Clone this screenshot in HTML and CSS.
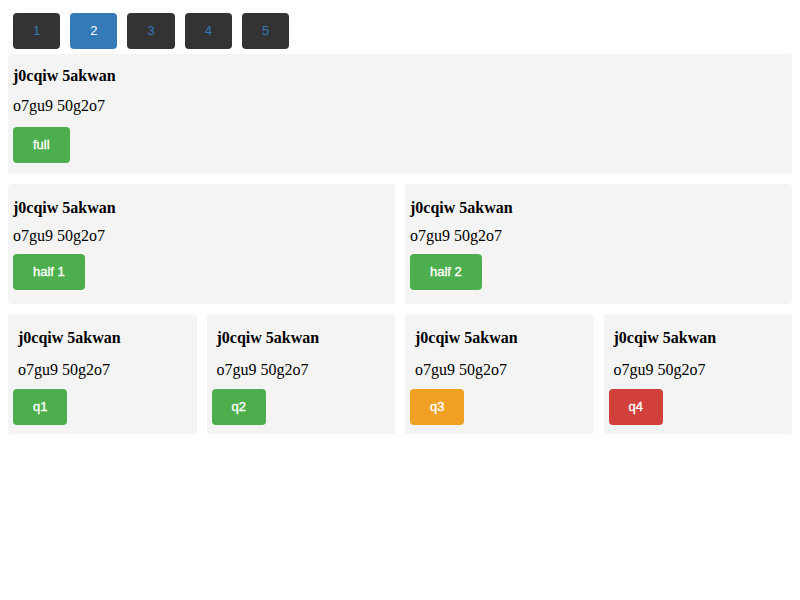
FILE: index.html
```html
<!DOCTYPE html>
<html>
<head>
<meta charset="utf-8">
<link rel="stylesheet" href="styles.css">
</head>
<body>
<nav class="pager">
  <button class="page">1</button>
  <button class="page active">2</button>
  <button class="page">3</button>
  <button class="page">4</button>
  <button class="page">5</button>
</nav>
<div class="row row-1">
  <div class="card card-full">
    <div class="title">j0cqiw 5akwan</div>
    <div class="text">o7gu9 50g2o7</div>
    <button class="btn green">full</button>
  </div>
</div>
<div class="row row-2">
  <div class="card card-half">
    <div class="title">j0cqiw 5akwan</div>
    <div class="text">o7gu9 50g2o7</div>
    <button class="btn green">half 1</button>
  </div>
  <div class="card card-half">
    <div class="title">j0cqiw 5akwan</div>
    <div class="text">o7gu9 50g2o7</div>
    <button class="btn green">half 2</button>
  </div>
</div>
<div class="row row-4">
  <div class="card card-quarter">
    <div class="title">j0cqiw 5akwan</div>
    <div class="text">o7gu9 50g2o7</div>
    <button class="btn green">q1</button>
  </div>
  <div class="card card-quarter">
    <div class="title">j0cqiw 5akwan</div>
    <div class="text">o7gu9 50g2o7</div>
    <button class="btn green">q2</button>
  </div>
  <div class="card card-quarter">
    <div class="title">j0cqiw 5akwan</div>
    <div class="text">o7gu9 50g2o7</div>
    <button class="btn orange">q3</button>
  </div>
  <div class="card card-quarter">
    <div class="title">j0cqiw 5akwan</div>
    <div class="text">o7gu9 50g2o7</div>
    <button class="btn red">q4</button>
  </div>
</div>
</body>
</html>
```

FILE: styles.css
```css
html, body {
  background: #ffffff;
}
body {
  margin: 8px;
  font-family: "Liberation Serif", "Times New Roman", serif;
  font-size: 16px;
  color: #000;
}
.pager {
  display: flex;
  gap: 10px;
  padding: 5px;
}
.page {
  height: 36px;
  padding: 0 20px;
  border: none;
  border-radius: 4px;
  background: #333333;
  color: #337ab7;
  font-family: "Liberation Sans", Arial, sans-serif;
  font-size: 13px;
  line-height: 36px;
  cursor: pointer;
}
.page.active {
  background: #337ab7;
  color: #ffffff;
}
.row {
  display: grid;
  gap: 10px;
  margin-top: 10px;
}
.row-1 {
  grid-template-columns: 1fr;
  margin-top: 0;
}
.row-2 {
  grid-template-columns: 1fr 1fr;
}
.row-4 {
  grid-template-columns: repeat(4, 1fr);
}
.card {
  background: #f4f4f4;
  border-radius: 4px;
  height: 120px;
  box-sizing: border-box;
  padding: 5px;
  display: flex;
  flex-direction: column;
  align-items: flex-start;
}
.title {
  font-weight: bold;
  line-height: 18px;
}
.text {
  line-height: 18px;
}
.btn {
  height: 36px;
  padding: 0 20px;
  border: none;
  border-radius: 4px;
  color: #ffffff;
  font-family: "Liberation Sans", Arial, sans-serif;
  font-size: 13px;
  line-height: 36px;
  -webkit-text-stroke: 0.35px #ffffff;
}
.green { background: #4cae4c; }
.orange { background: #f0a124; }
.red { background: #d1403a; }

.card-full .title { margin-top: 8px; }
.card-full .text { margin-top: 12px; }
.card-full .btn { margin-top: 12px; }

.card-half .title { margin-top: 10px; }
.card-half .text { margin-top: 10px; }
.card-half .btn { margin-top: 9px; }

.card-quarter .title { margin-top: 10px; padding-left: 5px; }
.card-quarter .text { margin-top: 14px; padding-left: 5px; }
.card-quarter .btn { margin-top: 10px; }
```
